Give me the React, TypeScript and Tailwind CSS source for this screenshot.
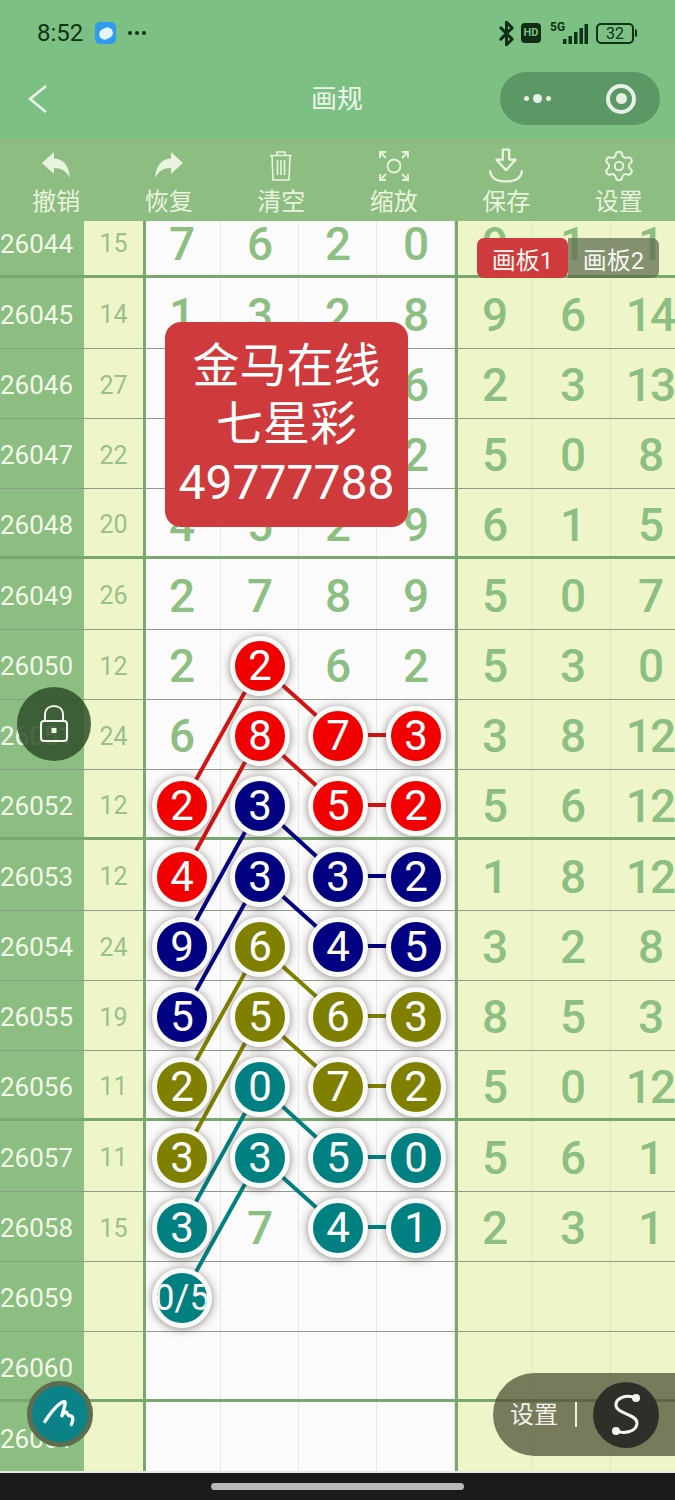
import { Bluetooth, Settings } from 'lucide-react';

type Color = 'r' | 'n' | 'o' | 't';
type Cell = string | [string, Color];

const ballColors: Record<Color, string> = {
  r: 'bg-[#f00000]',
  n: 'bg-[#000080]',
  o: 'bg-[#808000]',
  t: 'bg-[#008080]',
};

const rows: { id: string; sum: string; cells: Cell[]; right: string[]; thick?: boolean }[] = [
  { id: '26044', sum: '15', cells: ['7', '6', '2', '0'], right: ['9', '1', '1'], thick: true },
  { id: '26045', sum: '14', cells: ['1', '3', '2', '8'], right: ['9', '6', '14'] },
  { id: '26046', sum: '27', cells: ['7', '8', '6', '6'], right: ['2', '3', '13'] },
  { id: '26047', sum: '22', cells: ['9', '5', '6', '2'], right: ['5', '0', '8'] },
  { id: '26048', sum: '20', cells: ['4', '5', '2', '9'], right: ['6', '1', '5'], thick: true },
  { id: '26049', sum: '26', cells: ['2', '7', '8', '9'], right: ['5', '0', '7'] },
  { id: '26050', sum: '12', cells: ['2', ['2', 'r'], '6', '2'], right: ['5', '3', '0'] },
  { id: '26051', sum: '24', cells: ['6', ['8', 'r'], ['7', 'r'], ['3', 'r']], right: ['3', '8', '12'] },
  { id: '26052', sum: '12', cells: [['2', 'r'], ['3', 'n'], ['5', 'r'], ['2', 'r']], right: ['5', '6', '12'], thick: true },
  { id: '26053', sum: '12', cells: [['4', 'r'], ['3', 'n'], ['3', 'n'], ['2', 'n']], right: ['1', '8', '12'] },
  { id: '26054', sum: '24', cells: [['9', 'n'], ['6', 'o'], ['4', 'n'], ['5', 'n']], right: ['3', '2', '8'] },
  { id: '26055', sum: '19', cells: [['5', 'n'], ['5', 'o'], ['6', 'o'], ['3', 'o']], right: ['8', '5', '3'] },
  { id: '26056', sum: '11', cells: [['2', 'o'], ['0', 't'], ['7', 'o'], ['2', 'o']], right: ['5', '0', '12'], thick: true },
  { id: '26057', sum: '11', cells: [['3', 'o'], ['3', 't'], ['5', 't'], ['0', 't']], right: ['5', '6', '1'] },
  { id: '26058', sum: '15', cells: [['3', 't'], '7', ['4', 't'], ['1', 't']], right: ['2', '3', '1'] },
  { id: '26059', sum: '', cells: [['0/5', 't'], '', '', ''], right: ['', '', ''] },
  { id: '26060', sum: '', cells: ['', '', '', ''], right: ['', '', ''], thick: true },
  { id: '26061', sum: '', cells: ['', '', '', ''], right: ['', '', ''] },
];

// ball centres the connecting lines run between
const lines: { stroke: string; segs: number[][] }[] = [
  { stroke: '#d51313', segs: [[260, 665, 182, 805], [260, 735, 182, 876], [260, 665, 338, 735], [260, 735, 338, 805], [338, 735, 416, 735], [338, 805, 416, 805]] },
  { stroke: '#000080', segs: [[260, 805, 182, 946], [260, 876, 182, 1016], [260, 805, 338, 876], [260, 876, 338, 946], [338, 876, 416, 876], [338, 946, 416, 946]] },
  { stroke: '#808000', segs: [[260, 946, 182, 1086], [260, 1016, 182, 1157], [260, 946, 338, 1016], [260, 1016, 338, 1086], [338, 1016, 416, 1016], [338, 1086, 416, 1086]] },
  { stroke: '#008080', segs: [[260, 1086, 182, 1227], [260, 1157, 182, 1297], [260, 1086, 338, 1157], [260, 1157, 338, 1227], [338, 1157, 416, 1157], [338, 1227, 416, 1227]] },
];

function ToolIcon({ name }: { name: string }) {
  const cls = 'w-[34px] h-[34px] text-[#e9f3df]';
  if (name === 'undo') {
    return (
      <svg viewBox="0 0 34 34" className={cls} fill="currentColor">
        <path d="M3 14 L15 3 V9.5 C25 10 30 17 31 29 C27 22 23 19 15 19 V25 Z" />
      </svg>
    );
  }
  if (name === 'redo') {
    return (
      <svg viewBox="0 0 34 34" className={cls} fill="currentColor">
        <path d="M31 14 L19 3 V9.5 C9 10 4 17 3 29 C7 22 11 19 19 19 V25 Z" />
      </svg>
    );
  }
  if (name === 'trash') {
    return (
      <svg viewBox="0 0 34 34" className={cls} fill="none" stroke="currentColor" strokeWidth="1.6">
        <path d="M6 6.5 H28 M13 6.5 V3 H21 V6.5 M8 6.5 L9 31 H25 L26 6.5 M13.5 11 V26 M17 11 V26 M20.5 11 V26" />
      </svg>
    );
  }
  if (name === 'zoom') {
    return (
      <svg viewBox="0 0 34 34" className={cls} fill="none" stroke="currentColor" strokeWidth="1.8">
        <circle cx="17" cy="17" r="6.5" />
        <path d="M3 9 V3 H9 M3 3 L9 9 M25 3 H31 V9 M31 3 L25 9 M3 25 V31 H9 M3 31 L9 25 M25 31 H31 V25 M31 31 L25 25" />
      </svg>
    );
  }
  if (name === 'save') {
    return (
      <svg viewBox="0 0 34 34" className="w-[36px] h-[40px] text-[#e9f3df]" fill="none" stroke="currentColor" strokeWidth="2.2">
        <path d="M14 1.5 H20 V11 H26 L17 21 L8 11 H14 Z" strokeLinejoin="round" />
        <path d="M2 22 C3 29 9 31.5 17 31.5 C25 31.5 31 29 32 22" strokeLinecap="round" />
      </svg>
    );
  }
  return <Settings size={34} strokeWidth={1.4} className="text-[#e9f3df]" />;
}

const tools = [
  { icon: 'undo', label: '撤销' },
  { icon: 'redo', label: '恢复' },
  { icon: 'trash', label: '清空' },
  { icon: 'zoom', label: '缩放' },
  { icon: 'save', label: '保存' },
  { icon: 'gear', label: '设置' },
];

function Ball({ text, color }: { text: string; color: Color }) {
  return (
    <div
      className={`relative z-10 w-[60px] h-[60px] shrink-0 rounded-full border-[5px] border-[#f8fbf8] overflow-hidden flex items-center justify-center font-normal text-white shadow-[0_1px_8px_rgba(70,50,50,0.6)] ${ballColors[color]} ${text.length > 1 ? 'text-[36px]' : 'text-[42px]'}`}
    >
      <span className="whitespace-nowrap">{text}</span>
    </div>
  );
}

export default function App() {
  return (
    <div className="relative w-[675px] h-[1500px] overflow-hidden bg-[#1b1b1b] font-['Roboto','Noto_Sans_CJK_SC',sans-serif]">
      {/* status bar + title */}
      <div className="h-[138px] bg-[#7cc084]">
        <div className="h-[66px] pl-[37px] pr-[38px] flex items-center justify-between">
          <div className="flex items-center">
            <span className="text-[24px] leading-none text-[#0f3319]">8:52</span>
            <div className="ml-[12px] w-[21px] h-[22px] rounded-[5px] bg-[#2f9bee] flex items-center justify-center">
              <div className="w-[14px] h-[11px] rounded-[6px] rotate-[-25deg] bg-[#e4f3fd]" />
            </div>
            <div className="ml-[12px] flex gap-[3px]">
              <span className="w-[4px] h-[4px] rounded-full bg-[#0f3319]" />
              <span className="w-[4px] h-[4px] rounded-full bg-[#0f3319]" />
              <span className="w-[4px] h-[4px] rounded-full bg-[#0f3319]" />
            </div>
          </div>
          <div className="flex items-center">
            <Bluetooth size={27} strokeWidth={2.6} className="text-[#0f2c16]" />
            <div className="ml-[1px] w-[20px] h-[20px] rounded-[4px] bg-[#0f2c16] text-[#7cc084] text-[11px] font-bold leading-[20px] text-center">HD</div>
            <div className="ml-[9px] w-[17px] text-[#0f3319] text-[12px] font-bold leading-none mb-[12px]">5G</div>
            <svg viewBox="0 0 26 22" className="w-[26px] h-[22px] -ml-[5px] mt-[2px]" fill="#0f3319">
              <rect x="1" y="16" width="3.5" height="5" />
              <rect x="6.5" y="13" width="3.5" height="8" />
              <rect x="12" y="9" width="3.5" height="12" />
              <rect x="17.5" y="5" width="3.5" height="16" />
              <rect x="22.5" y="1" width="3.5" height="20" />
            </svg>
            <div className="ml-[8px] w-[38px] h-[21px] rounded-[5px] border-2 border-[#0f3319] text-[#0f3319] text-[16px] leading-[17px] text-center">32</div>
            <div className="ml-[1px] w-[2px] h-[8px] bg-[#0f3319] rounded-r" />
          </div>
        </div>
        <div className="h-[72px] pl-[28px] pr-[15px] pb-[7px] grid grid-cols-[1fr_auto_1fr] items-center">
          <svg viewBox="0 0 20 30" className="w-[20px] h-[30px]" fill="none" stroke="#eef6ea" strokeWidth="2.6">
            <path d="M18 2 L2 15 L18 28" />
          </svg>
          <span className="-translate-x-[7px] text-[26px] leading-none text-[#eef6ea]">画规</span>
          <div className="justify-self-end w-[160px] h-[53px] rounded-full bg-[#5c9866] flex items-center">
            <div className="ml-[24px] flex items-center gap-[4px]">
              <span className="w-[5px] h-[5px] rounded-full bg-[#e6f0e4]" />
              <span className="w-[9px] h-[9px] rounded-full bg-[#e6f0e4]" />
              <span className="w-[5px] h-[5px] rounded-full bg-[#e6f0e4]" />
            </div>
            <div className="ml-[55px] w-[30px] h-[30px] rounded-full border-[4px] border-[#e6f0e4] flex items-center justify-center">
              <span className="w-[11px] h-[11px] rounded-full bg-[#e6f0e4]" />
            </div>
          </div>
        </div>
      </div>

      {/* toolbar */}
      <div className="h-[83px] bg-[#8dbd80] grid grid-cols-6">
        {tools.map((t) => (
          <div key={t.icon} className="flex flex-col items-center pt-[9px]">
            <div className="h-[38px] flex items-center justify-center">
              <ToolIcon name={t.icon} />
            </div>
            <span className="mt-[3px] text-[24px] leading-[28px] text-[#e9f3df]">{t.label}</span>
          </div>
        ))}
      </div>

      {/* table, scrolled so the first row is cut off */}
      <div className="relative h-[1250px] overflow-hidden">
        <div className="-mt-[13px]">
          {rows.map((row) => (
            <div
              key={row.id}
              className={`h-[70.25px] grid grid-cols-[84px_59px_78px_78px_78px_78px_78px_78px_78px] leading-none ${row.thick ? 'border-b-[3px] border-[#7aa76f]' : 'border-b-[1px] border-[#8d9b88]'}`}
            >
              <div className="bg-[#8bbe80] pt-[4px] flex items-center justify-end pr-[11px] text-[26px] leading-none text-[#f3f9ea]">{row.id}</div>
              <div className="bg-[#eef6c9] pt-[4px] flex items-center justify-center text-[25px] leading-none text-[#9cbf8c]">{row.sum}</div>
              {row.cells.map((c, i) => (
                <div
                  key={i}
                  className={`bg-[#fbfbfb] pt-[4px] flex items-center justify-center text-[46px] leading-none font-medium text-[#8dbf83] ${i === 0 ? 'shadow-[inset_3px_0_0_#7aa76f,inset_-1px_0_0_#e6e8e6]' : 'shadow-[inset_-1px_0_0_#e6e8e6]'}`}
                >
                  {typeof c === 'string' ? c : <Ball text={c[0]} color={c[1]} />}
                </div>
              ))}
              {row.right.map((c, i) => (
                <div
                  key={i}
                  className={`bg-[#eef6c9] pt-[4px] flex items-center justify-center text-[46px] leading-none font-medium tracking-[-2px] text-[#8dbf83] ${i === 0 ? 'shadow-[inset_3px_0_0_#7aa76f,inset_-1px_0_0_#e0e8c0]' : 'shadow-[inset_-1px_0_0_#e0e8c0]'}`}
                >
                  {c}
                </div>
              ))}
            </div>
          ))}
        </div>

        <svg viewBox="0 221 675 1250" className="absolute inset-0 w-[675px] h-[1250px] z-[5]" strokeWidth="4">
          {lines.map((l) =>
            l.segs.map((s, i) => <line key={l.stroke + i} x1={s[0]} y1={s[1]} x2={s[2]} y2={s[3]} stroke={l.stroke} />),
          )}
        </svg>
      </div>

      {/* bottom nav bar */}
      <div className="h-[29px] border-t-2 border-[#e8eae6] flex justify-center pt-[10px]">
        <div className="w-[253px] h-[7px] rounded-full bg-[#b8b8b8]" />
      </div>

      {/* board tabs */}
      <div className="absolute z-20 left-[477px] top-[238px] flex text-[24px] leading-[46px] text-[#f6f6f0]">
        <div className="w-[91px] h-[40px] rounded-[7px] bg-[#cf3a3c] text-center">画板1</div>
        <div className="w-[91px] h-[40px] rounded-r-[7px] bg-[#5f6f4f]/75 text-center">画板2</div>
      </div>

      {/* watermark */}
      <div className="absolute z-20 left-[165px] top-[322px] w-[243px] h-[205px] rounded-[16px] bg-[#cf3a3c] flex flex-col items-center justify-center text-[47px] leading-[58.5px] text-white">
        <span>金马在线</span>
        <span>七星彩</span>
        <span className="text-[48px]">49777788</span>
      </div>

      {/* lock */}
      <div className="absolute z-20 left-[17px] top-[687px] w-[74px] h-[74px] rounded-full bg-[#2f4f2a]/85 flex items-center justify-center">
        <svg viewBox="0 0 30 40" className="w-[30px] h-[40px]" fill="none" stroke="#f1f5ee" strokeWidth="2">
          <path d="M6 17 V11 C6 5 10 2 15 2 C20 2 24 5 24 11 V17" />
          <rect x="2" y="17" width="26" height="20" rx="3" />
          <rect x="12.5" y="24" width="5" height="5" fill="#f1f5ee" stroke="none" />
        </svg>
      </div>

      {/* pen button */}
      <div className="absolute z-20 left-[27px] top-[1381px] w-[66px] h-[66px] rounded-full bg-[#0b8288] border-[5px] border-[#5d6d50] flex items-center justify-center">
        <svg viewBox="0 0 40 36" className="w-[38px] h-[34px]" fill="none" stroke="#f4f8f6" strokeWidth="3.6" strokeLinecap="round" strokeLinejoin="round">
          <path d="M4 26 C10 17 17 7 24 5 C27 4 25 9 22 20 C25 15 27 15 28 18 C29 21 31 19 33 21 C34 23 33 27 32 29" />
        </svg>
      </div>

      {/* settings pill */}
      <div className="absolute z-20 left-[493px] top-[1373px] w-[182px] h-[83px] rounded-l-[42px] bg-[#4f5236]/75 flex items-center pl-[17px] text-[24px] text-[#f2f2ea]">
        <span>设置</span>
        <div className="ml-[17px] w-[2px] h-[25px] bg-[#f2f2ea]" />
        <div className="ml-[16px] w-[66px] h-[66px] rounded-full bg-[#2d2f28] flex items-center justify-center">
          <svg viewBox="0 0 36 46" className="w-[36px] h-[46px]" fill="none" stroke="#f4f4f0" strokeWidth="3">
            <path d="M28 6 C18 2 7 6 8 14 C9 22 29 22 29 31 C29 40 16 42 8 39" />
            <circle cx="28" cy="6" r="4" fill="#f4f4f0" stroke="none" />
            <circle cx="8" cy="39" r="4" fill="#f4f4f0" stroke="none" />
          </svg>
        </div>
      </div>
    </div>
  );
}
